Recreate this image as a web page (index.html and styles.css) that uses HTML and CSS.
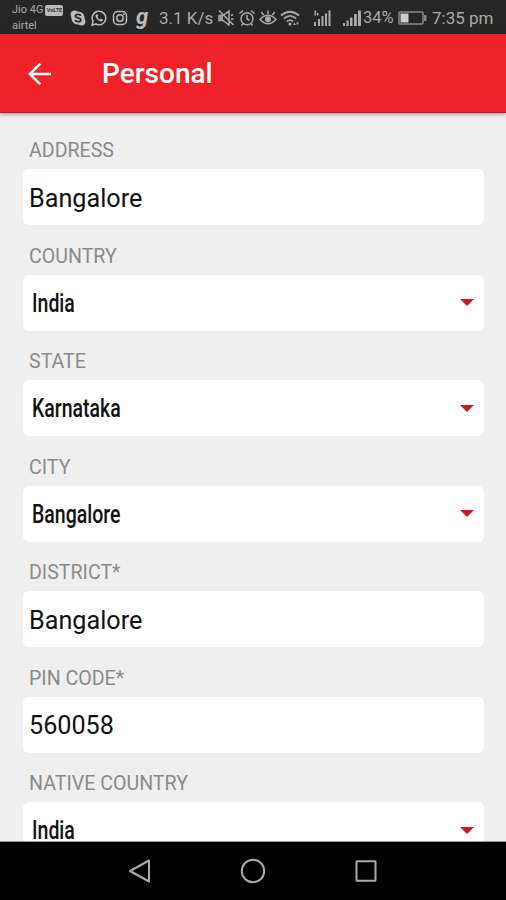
FILE: index.html
```html
<!DOCTYPE html>
<html>
<head>
<title>Personal</title>
<meta charset="utf-8">
<meta name="viewport" content="width=device-width, initial-scale=1">
<link rel="stylesheet" href="styles.css">
</head>
<body>

<div id="status_bar">
	<div class="carrier">
		<div>Jio 4G<span class="volte">VoLTE</span></div>
		<div>airtel</div>
	</div>
	<div class="notifications">
		<svg width="16" height="16" viewBox="0 0 16 16">
			<circle cx="8" cy="8" r="6.6" fill="#bbb"/>
			<circle cx="4.5" cy="4.5" r="3.9" fill="#bbb"/>
			<circle cx="11.5" cy="11.5" r="3.9" fill="#bbb"/>
			<path d="M10.8 5.7C10 3.7 5.4 3.8 5.4 6.1C5.4 8.5 10.8 7.3 10.8 9.9C10.8 12.3 5.8 12.3 5.1 10" fill="none" stroke="#262626" stroke-width="1.7"/>
		</svg>
		<svg width="16" height="16" viewBox="0 0 16 16">
			<path d="M1 15l1.1-3.6A6.8 6.8 0 1 1 4.8 14z" fill="none" stroke="#bbb" stroke-width="1.5"/>
			<path d="M5 4.5c-2 2.5 3 8 6.3 6.8l.8-1.5-2-1.2-1 1C8 9.3 6.8 8 6.5 7l.8-1-.8-1.7z" fill="#bbb"/>
		</svg>
		<svg width="16" height="16" viewBox="0 0 16 16">
			<rect x="1.5" y="1.5" width="13" height="13" rx="4" fill="none" stroke="#bbb" stroke-width="1.5"/>
			<circle cx="8" cy="8" r="3.2" fill="none" stroke="#bbb" stroke-width="1.5"/>
			<circle cx="11.8" cy="4.3" r="1" fill="#bbb"/>
		</svg>
		<span class="g_app">g</span>
	</div>
	<span class="speed">3.1 K/s</span>
	<div class="system">
		<!-- muted -->
		<svg width="18" height="18" viewBox="0 0 18 18">
			<path d="M2 6.5h4L12 2v14l-6-4.5H2zM2 1.5L16.5 16M14 6.5l2-1M14 10h2.500" fill="none" stroke="#aaa" stroke-width="1.5"/>
			<path d="M2 6.5h4v5H2z" fill="#999"/>
		</svg>
		<!-- alarm -->
		<svg width="18" height="18" viewBox="0 0 18 18">
			<circle cx="9" cy="9.8" r="6" fill="none" stroke="#aaa" stroke-width="1.5"/>
			<path d="M9 6v4l2.5 1.5M1.5 4.5L5 1.5M16.5 4.5L13 1.5M5 14.5l-1.5 2M13 14.5l1.5 2" fill="none" stroke="#aaa" stroke-width="1.5"/>
		</svg>
		<!-- eye comfort -->
		<svg width="18" height="18" viewBox="0 0 18 18">
			<path d="M1 10.5Q9 2 17 10.5Q9 19 1 10.5zM9 5V1.5M4.5 6L2.5 3M13.5 6l2-3" fill="none" stroke="#aaa" stroke-width="1.5"/>
			<circle cx="9" cy="10.3" r="3" fill="#aaa"/>
		</svg>
		<!-- wifi -->
		<svg width="20" height="18" viewBox="0 0 20 18">
			<path d="M1 6.5Q10-1 19 6.5M3.800 9.7Q10 4 16.2 9.7M6.8 12.7Q10 9.5 13.2 12.7" fill="none" stroke="#aaa" stroke-width="1.7"/>
			<circle cx="10" cy="15" r="1.6" fill="#aaa"/>
			<path d="M13 16l1.5-2.5L16 16zM16 13.5h3L17.5 16z" fill="#aaa"/>
		</svg>
	</div>
	<svg class="signal" width="18" height="18" viewBox="0 0 18 18">
		<path d="M1 13h2v4H1zM5 10h2v7H5zM8.5 7h2v10h-2zM12 4.5h2V17h-2zM15.5 1.5h2V17h-2zM1.5 1.5h1.6v5H1.5zM4 4h1.5v2.5H4z" fill="#aaa"/>
	</svg>
	<svg class="signal2" width="18" height="18" viewBox="0 0 18 18">
		<path d="M0 14h2v3H0zM3.5 11.5h2.2V17H3.5zM7 8.5h2.5V17H7zM11 5h2.8v12H11zM15 1.5h3V17h-3z" fill="#aaa"/>
	</svg>
	<span class="percent">34%</span>
	<svg class="battery" width="30" height="14" viewBox="0 0 30 14">
		<rect x="1" y="1" width="24" height="12" rx="1" fill="none" stroke="#888" stroke-width="1.5"/>
		<rect x="2.5" y="2.5" width="8" height="9" fill="#ccc"/>
		<rect x="26" y="4" width="2.5" height="6" fill="#888"/>
	</svg>
	<span class="time">7:35 pm</span>
</div>

<div id="title_bar">
	<svg width="24" height="24" viewBox="0 0 24 24">
		<path d="M23 12H2M12.3 1.6L1.9 12l10.400 10.400" fill="none" stroke="#fff" stroke-width="2.6"/>
	</svg>
	<h1>Personal</h1>
</div>

<div id="form_div">
	<div class="field">
		<label>ADDRESS</label>
		<div class="box">Bangalore</div>
	</div>
	<div class="field">
		<label>COUNTRY</label>
		<div class="box select"><span>India</span><i class="arrow"></i></div>
	</div>
	<div class="field">
		<label>STATE</label>
		<div class="box select"><span>Karnataka</span><i class="arrow"></i></div>
	</div>
	<div class="field">
		<label>CITY</label>
		<div class="box select"><span>Bangalore</span><i class="arrow"></i></div>
	</div>
	<div class="field">
		<label>DISTRICT*</label>
		<div class="box">Bangalore</div>
	</div>
	<div class="field">
		<label>PIN CODE*</label>
		<div class="box">560058</div>
	</div>
	<div class="field">
		<label>NATIVE COUNTRY</label>
		<div class="box select"><span>India</span><i class="arrow"></i></div>
	</div>
</div>

<div id="nav_bar">
	<svg width="24" height="26" viewBox="0 0 24 26">
		<path d="M21 2.5v21L2 13z" fill="none" stroke="#aaa" stroke-width="2" stroke-linejoin="round"/>
	</svg>
	<svg width="26" height="26" viewBox="0 0 26 26">
		<circle cx="13" cy="13" r="11.2" fill="none" stroke="#aaa" stroke-width="2"/>
	</svg>
	<svg width="24" height="26" viewBox="0 0 24 26">
		<rect x="2.5" y="3.2" width="19" height="19.5" rx="0.5" fill="none" stroke="#aaa" stroke-width="2"/>
	</svg>
</div>

</body>
</html>
```
FILE: styles.css
```css
* {
	box-sizing: border-box;
}

body {
	margin: 0px;
	height: 900px;
	overflow: hidden;
	display: flex;
	flex-direction: column;
	background: #efefef;
	font-family: Roboto, sans-serif;
}

svg {
	display: block;
	flex: none;
}

#status_bar {
	height: 34px;
	flex: none;
	display: flex;
	align-items: center;
	background: #262626;
	color: #aaa;
	font-size: 17px;
	line-height: 20px;
	white-space: nowrap;
	padding-top: 2px;
}

.carrier {
	width: 58px;
	margin-left: 12px;
	font-size: 11px;
	line-height: 16px;
}

.carrier div {
	display: flex;
	align-items: center;
}

.volte {
	margin-left: 2px;
	width: 18px;
	height: 11px;
	border-radius: 2px;
	background: #bbb;
	color: #333;
	font-size: 5.5px;
	font-weight: bold;
	line-height: 11px;
	text-align: center;
}

.notifications {
	display: flex;
	align-items: center;
	gap: 5px;
	width: 89px;
}

.g_app {
	margin-left: 3px;
	padding-bottom: 3px;
	font-size: 22px;
	line-height: 16px;
	font-weight: bold;
	font-style: italic;
	color: #bbb;
}

.speed {
	width: 58px;
}

.system {
	display: flex;
	gap: 3px;
	width: 96px;
}

.signal2 {
	margin-left: 12px;
}

.percent {
	width: 35px;
	margin-left: 2px;
	font-size: 16.5px;
}

.battery {
	margin-right: 4px;
}

#title_bar {
	height: 79px;
	flex: none;
	display: flex;
	align-items: center;
	padding: 2px 28px 0px;
	background: #ef2129;
	border-bottom: 1px solid #c9151c;
	box-shadow: 0px 1px 4px rgba(0,0,0,0.4);
}

#title_bar h1 {
	margin: 0px 0px 0px 50px;
	color: #fff;
	font-size: 28px;
	font-weight: 500;
	line-height: 32px;
}

#form_div {
	flex: 1;
	min-height: 0px;
	overflow: hidden;
	padding: 24px 22px 0px 23px;
	border-bottom: 1px solid #999;
}

.field {
	height: 105.5px;
}

.field label {
	display: block;
	height: 32px;
	padding-left: 6px;
	color: #8a8a8a;
	font-size: 19.6px;
	line-height: 28px;
}

.box {
	height: 56px;
	display: flex;
	align-items: center;
	padding: 2px 6px 0px;
	border-radius: 6px;
	background: #fff;
	color: #111;
	font-size: 25.2px;
}

.select {
	justify-content: space-between;
	padding: 0px 10px 0px 9px;
}

/* condensed face for the dropdown values */
.select span {
	font-size: 26px;
	font-weight: 500;
	transform: scaleX(0.75);
	transform-origin: left;
}

.arrow {
	border: 7px solid transparent;
	border-top-color: #cf1820;
	border-bottom: 0px;
}

#nav_bar {
	height: 58px;
	flex: none;
	display: flex;
	align-items: center;
	justify-content: center;
	gap: 88px;
	background: #000;
}
```
